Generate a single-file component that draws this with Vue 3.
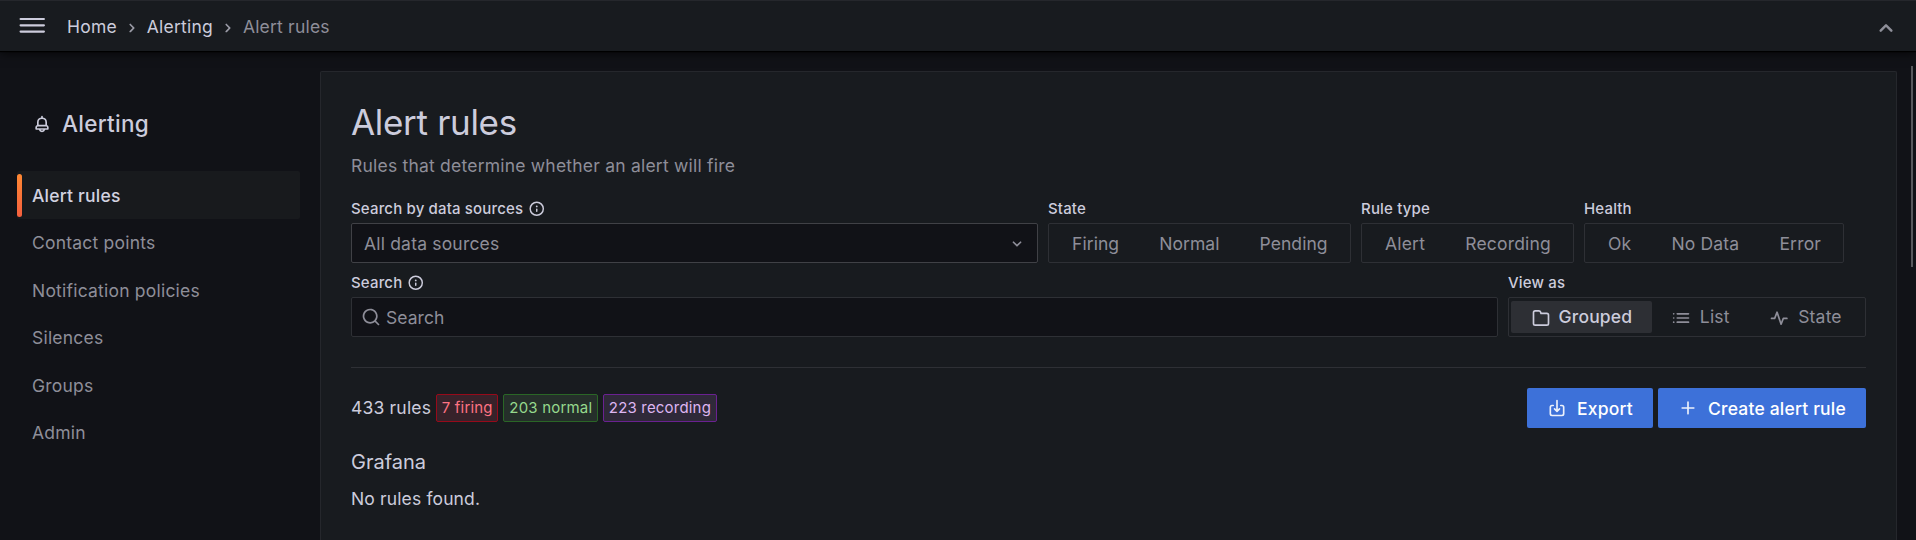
<script setup>
const nav = ['Alert rules', 'Contact points', 'Notification policies', 'Silences', 'Groups', 'Admin']
const filters = [
  { key: 'state', label: 'State', options: ['Firing', 'Normal', 'Pending'] },
  { key: 'type', label: 'Rule type', options: ['Alert', 'Recording'] },
  { key: 'health', label: 'Health', options: ['Ok', 'No Data', 'Error'] },
]
const icons = {
  right: 'M14.83,11.29,10.59,7.05a1,1,0,0,0-1.42,0,1,1,0,0,0,0,1.41L12.71,12,9.17,15.54a1,1,0,0,0,0,1.41,1,1,0,0,0,.71.29,1,1,0,0,0,.71-.29l4.24-4.24A1,1,0,0,0,14.83,11.29Z',
  up: 'M17,13.41,12.71,9.17a1,1,0,0,0-1.42,0L7.05,13.41a1,1,0,0,0,0,1.42,1,1,0,0,0,1.41,0L12,11.29l3.54,3.54a1,1,0,0,0,.7.29,1,1,0,0,0,.71-.29A1,1,0,0,0,17,13.41Z',
  down: 'M17,9.17a1,1,0,0,0-1.41,0L12,12.71,8.46,9.17a1,1,0,0,0-1.41,0,1,1,0,0,0,0,1.42l4.24,4.24a1,1,0,0,0,1.42,0L17,10.59A1,1,0,0,0,17,9.17Z',
  bell: 'M18,13.18V10a6,6,0,0,0-5-5.91V3a1,1,0,0,0-2,0V4.09A6,6,0,0,0,6,10v3.18A3,3,0,0,0,4,16v2a1,1,0,0,0,1,1H8.14a4,4,0,0,0,7.72,0H19a1,1,0,0,0,1-1V16A3,3,0,0,0,18,13.18ZM8,10a4,4,0,0,1,8,0v3H8Zm4,10a2,2,0,0,1-1.72-1h3.44A2,2,0,0,1,12,20Zm6-3H6V16a1,1,0,0,1,1-1H17a1,1,0,0,1,1,1Z',
  info: 'M12,2A10,10,0,1,0,22,12,10,10,0,0,0,12,2Zm0,18a8,8,0,1,1,8-8A8,8,0,0,1,12,20Zm0-8.5a1,1,0,0,0-1,1v3a1,1,0,0,0,2,0v-3A1,1,0,0,0,12,11.5Zm0-4a1.25,1.25,0,1,0,1.25,1.25A1.25,1.25,0,0,0,12,7.5Z',
  search: 'M21.71,20.29,18,16.61A9,9,0,1,0,16.61,18l3.68,3.68a1,1,0,0,0,1.42,0A1,1,0,0,0,21.71,20.29ZM11,18a7,7,0,1,1,7-7A7,7,0,0,1,11,18Z',
  folder: 'M19,5.5H12.72l-.32-1a3,3,0,0,0-2.84-2H5a3,3,0,0,0-3,3v13a3,3,0,0,0,3,3H19a3,3,0,0,0,3-3V8.5A3,3,0,0,0,19,5.5Zm1,13a1,1,0,0,1-1,1H5a1,1,0,0,1-1-1V5.5a1,1,0,0,1,1-1H9.56a1,1,0,0,1,.95.68l.54,1.64A1,1,0,0,0,12,7.5h7a1,1,0,0,1,1,1Z',
  plus: 'M19,11H13V5a1,1,0,0,0-2,0v6H5a1,1,0,0,0,0,2h6v6a1,1,0,0,0,2,0V13h6a1,1,0,0,0,0-2Z',
}
</script>

<template>
  <div class="app">
    <header class="topbar">
      <svg class="burger" viewBox="0 0 26 17"><path d="M1.600 2h23.300M1.600 8.300h23.300M1.600 14.600h23.300" /></svg>
      <nav class="crumbs">
        <span>Home</span>
        <svg class="sep" viewBox="0 0 24 24"><path :d="icons.right" /></svg>
        <span>Alerting</span>
        <svg class="sep" viewBox="0 0 24 24"><path :d="icons.right" /></svg>
        <span class="muted">Alert rules</span>
      </nav>
      <svg class="collapse" viewBox="0 0 24 24"><path :d="icons.up" /></svg>
    </header>

    <div class="body">
      <aside class="side">
        <div class="side-title">
          <svg viewBox="0 0 24 24"><path :d="icons.bell" /></svg>
          <span>Alerting</span>
        </div>
        <ul>
          <li v-for="(n, i) in nav" :key="n" :class="{ active: i === 0 }">{{ n }}</li>
        </ul>
      </aside>

      <main class="panel">
        <h1>Alert rules</h1>
        <p class="subtitle">Rules that determine whether an alert will fire</p>

        <div class="row first">
          <div class="field source">
            <label>Search by data sources <svg viewBox="0 0 24 24"><path :d="icons.info" /></svg></label>
            <div class="box select">
              <span>All data sources</span>
              <svg viewBox="0 0 24 24"><path :d="icons.down" /></svg>
            </div>
          </div>
          <div v-for="f in filters" :key="f.key" class="field" :class="f.key">
            <label>{{ f.label }}</label>
            <div class="box radio">
              <span v-for="o in f.options" :key="o" class="opt">{{ o }}</span>
            </div>
          </div>
        </div>

        <div class="row second">
          <div class="field search">
            <label>Search <svg viewBox="0 0 24 24"><path :d="icons.info" /></svg></label>
            <div class="box input">
              <svg viewBox="0 0 24 24"><path :d="icons.search" /></svg>
              <span>Search</span>
            </div>
          </div>
          <div class="field view">
            <label>View as</label>
            <div class="box radio">
              <span class="opt on"><svg viewBox="0 0 24 24"><path :d="icons.folder" /></svg>Grouped</span>
              <span class="opt">
                <svg class="line" viewBox="0 0 24 24"><path d="M7.500 7H21M7.500 12H21M7.500 17H21M3.200 7h.1M3.200 12h.1M3.200 17h.1" /></svg>List
              </span>
              <span class="opt">
                <svg class="line" viewBox="0 0 24 24"><path d="M3 12.500h3.800l2.900-7.500 4.800 14.500 2.700-7H21.500" /></svg>State
              </span>
            </div>
          </div>
        </div>

        <div class="summary">
          <div class="counts">
            <span class="total">433 rules</span>
            <span class="badge red">7 firing</span>
            <span class="badge green">203 normal</span>
            <span class="badge purple">223 recording</span>
          </div>
          <div class="actions">
            <button class="export">
              <svg class="line" viewBox="0 0 24 24"><path d="M12 3v12.500M9 13l3 3 3-3M7.500 9H6a2 2 0 0 0-2 2v8a2 2 0 0 0 2 2h12a2 2 0 0 0 2-2v-8a2 2 0 0 0-2-2h-1.500" /></svg>Export
            </button>
            <button class="create"><svg viewBox="0 0 24 24"><path :d="icons.plus" /></svg>Create alert rule</button>
          </div>
        </div>

        <h2>Grafana</h2>
        <p class="empty">No rules found.</p>
      </main>
      <div class="scrollbar"></div>
    </div>
  </div>
</template>

<style>
body { background: #111217; overflow: hidden; }
</style>

<style scoped>
* { box-sizing: border-box; }
.app {
  height: 540px; overflow: hidden; background: #111217; color: #ccccdc;
  font: 400 17.5px/27.5px Inter, "Liberation Sans", sans-serif; letter-spacing: 0.01071em;
}
svg { fill: currentColor; flex: none; display: block; }
svg.line { fill: none; stroke: currentColor; stroke-width: 2; stroke-linecap: round; stroke-linejoin: round; }
h1, h2, p, ul { margin: 0; padding: 0; }
.topbar {
  position: relative; height: 51px; display: flex; align-items: center; padding: 2px 20px 0 19px;
  background: #181b1f; border-top: 1px solid #25272c;
  box-shadow: 0 1px 1px #000, 0 2px 10px rgba(0, 0, 0, .75);
}
.burger { width: 26px; height: 17px; margin-top: -3px; fill: none; stroke: #ccccdc; stroke-width: 2.2; stroke-linecap: round; }
.crumbs { display: flex; align-items: center; margin-left: 22px; letter-spacing: 0.0115em; }
.crumbs span { white-space: nowrap; }
.sep { width: 20px; height: 20px; margin: 1px 5px 0; color: #9a9ba6; }
.muted { color: #8e8e99; }
.collapse { width: 30px; height: 30px; margin-top: 1px; margin-left: auto; margin-right: -5px; color: #8e8f99; }
.body { display: flex; height: 489px; }
.side { width: 320px; padding: 59px 20px 0 17px; flex: none; }
.side-title { display: flex; align-items: center; height: 28px; margin-bottom: 33px; padding-left: 15px; font-size: 22.5px; font-weight: 500; letter-spacing: 0.013em; }
.side-title svg { width: 20px; height: 20px; margin-right: 10px; }
ul { list-style: none; }
li { position: relative; height: 47.500px; line-height: 48px; padding-left: 15px; color: #8e8e99; letter-spacing: 0.0122em; }
li:nth-child(odd) { line-height: 49px; }
li.active { color: #d2d2e0; font-weight: 500; background: #181a1d; border-radius: 2px; }
li.active::before {
  content: ""; position: absolute; left: 0; top: 3px; bottom: 2px; width: 5px; border-radius: 2.500px;
  background: linear-gradient(#ff8833, #f55f3e);
}
.panel { width: 1577px; flex: none; margin-top: 20px; padding: 30px 30px 0; background: #181b1f; border: 1px solid #25272c; border-bottom: 0; border-radius: 2px 2px 0 0; }
h1 { font-size: 35px; line-height: 40px; font-weight: 400; letter-spacing: -0.00893em; }
.subtitle { margin-top: 10px; color: #8e8e99; line-height: 28px; letter-spacing: 0.0122em; }
.row { display: flex; }
.first { margin-top: 19px; }
.second { margin-top: 10px; }
label { display: flex; align-items: center; height: 19px; margin-bottom: 5px; font-size: 15px; line-height: 19px; font-weight: 500; letter-spacing: 0.01071em; white-space: nowrap; }
label svg { width: 17.500px; height: 17.500px; margin-left: 5px; }
.box { height: 40px; border: 1px solid #2e3035; border-radius: 2px; display: flex; align-items: center; color: #8e8e99; }
.source { width: 687px; margin-right: 10px; }
.state { width: 303px; margin-right: 10px; }
.type { width: 213px; margin-right: 10px; }
.health { width: 260px; }
.search { width: 1147px; margin-right: 10px; }
.view { width: 358px; }
.select { background: #111217; border-color: #404146; justify-content: space-between; padding: 0 10px 0 12px; }
.select span, .input span { padding-top: 1.500px; }
.select svg { width: 20px; height: 20px; margin-top: 2px; }
.input { background: #111217; padding-left: 9px; letter-spacing: 0.003em; }
.input svg { width: 20px; height: 20px; margin-right: 5px; }
.radio { padding: 2px; justify-content: space-between; }
.opt { height: 32px; display: flex; align-items: center; padding: 0 20px; white-space: nowrap; border-radius: 2px; }
.first .opt { padding-top: 1.500px; }
.first .opt:first-child { padding-left: 21px; }
.state .opt { letter-spacing: 0.004em; }
.state .opt:last-child { padding-right: 20.500px; }
.opt svg { width: 20px; height: 20px; margin: 2px 7px 0 0; }
.opt.on { background: #2d2f34; color: #ccccdc; font-weight: 500; }
.opt.on svg { margin-right: 7.500px; }
.view .radio { justify-content: flex-start; }
.view .opt:not(.on) { padding: 0 20px 0 18.500px; }
.view .opt:not(.on) svg { margin-right: 9px; }
.view .opt:last-child { padding-left: 19.500px; }
.summary { margin-top: 30px; border-top: 1px solid #2e3035; padding-top: 20px; display: flex; justify-content: space-between; }
.counts { display: flex; align-items: center; gap: 5px; height: 40px; white-space: nowrap; }
.badge { height: 28px; display: flex; align-items: center; padding: 0 4.600px; border: 1px solid; border-radius: 2px; font-size: 15px; }
.badge.green { padding: 0 5px; }
.red { color: #ff7383; background: #37222a; border-color: #960a1a; }
.green { color: #96d98d; background: #252f2a; border-color: #2a6626; }
.purple { color: #deb6f2; background: #2f2939; border-color: #6a2191; }
.actions { display: flex; gap: 5px; }
button { height: 40px; border: 0; border-radius: 2px; background: #3d71d9; color: #fff; font: 500 17.5px/39px Inter, sans-serif; letter-spacing: 0.01071em; display: flex; align-items: center; padding: 1.500px 20px 0; white-space: nowrap; }
button svg { width: 20px; height: 20px; margin: -1px 10px 0 0; opacity: .9; }
.export { width: 126px; }
.create { width: 208px; }
h2 { margin-top: 21px; font-size: 20px; line-height: 27px; font-weight: 400; letter-spacing: 0; }
.empty { margin-top: 9px; line-height: 28px; letter-spacing: 0.008em; }
.scrollbar { width: 2px; height: 201px; margin: 15px 0 0 14px; background: #58595d; }
</style>
